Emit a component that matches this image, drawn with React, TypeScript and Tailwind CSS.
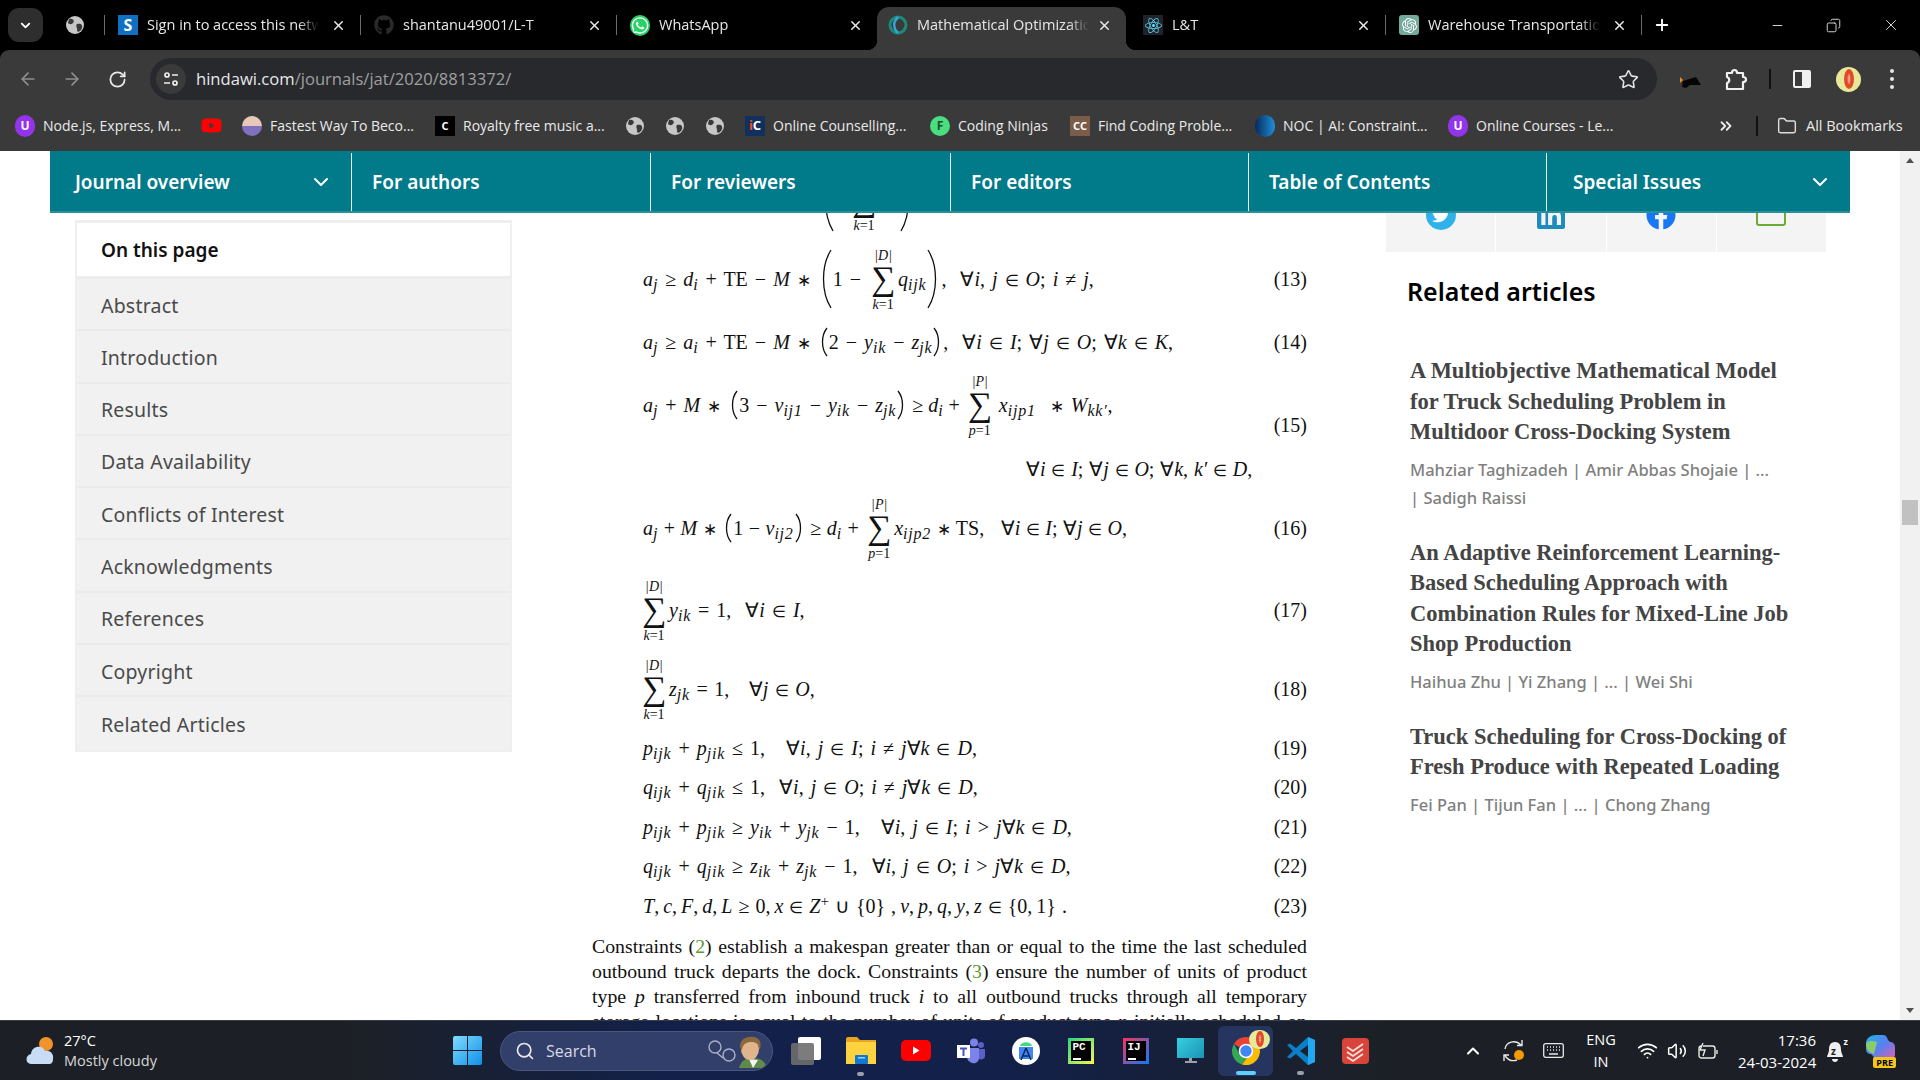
import type { ReactNode } from "react";
import { ArrowLeft, ArrowRight, ChevronDown, ChevronUp, Copy, Folder, Minus, Plus, RotateCw, Search, Star, Volume2, Wifi, X, ChevronsRight } from "lucide-react";
import { FaFacebook, FaGithub, FaLinkedin, FaReact, FaTwitter, FaWhatsapp, FaYoutube } from "react-icons/fa";
import { SiOpenai } from "react-icons/si";

const uiFont = "font-['Open_Sans',sans-serif]";
const plexFont = "font-['Noto_Sans',sans-serif]";

function Globe({ size = 18 }: { size?: number }) {
  return (
    <svg width={size} height={size} viewBox="0 0 18 18">
      <circle cx="9" cy="9" r="9" fill="#c7c7c7" />
      <path d="M3 3 C7 2 9 5 7 7 C5 9 3 8 2 7 Z M11 8 C14 7 17 8 16 12 C15 15 12 17 11 15 C12 12 9 10 11 8 Z" fill="#3a3a3a" />
    </svg>
  );
}

function Tab({ icon, title, active, width = 256 }: { icon: ReactNode; title: string; active?: boolean; width?: number }) {
  return (
    <div className={`relative flex h-[43px] shrink-0 items-center pr-[14px] pb-[7px] ${active ? "rounded-t-[12px] bg-[#3a3a3a] pl-[11px]" : "pl-[14px]"}`} style={{ width }}>
      {active && (
        <>
          <span className="absolute bottom-0 left-[-10px] h-[10px] w-[10px] bg-[radial-gradient(circle_at_0_0,#000_10px,#3a3a3a_10.5px)]" />
          <span className="absolute right-[-10px] bottom-0 h-[10px] w-[10px] bg-[radial-gradient(circle_at_100%_0,#000_10px,#3a3a3a_10.5px)]" />
        </>
      )}
      <span className="flex h-5 w-5 shrink-0 items-center justify-center">{icon}</span>
      <span className={`ml-[9px] w-[172px] overflow-hidden text-[14.5px] whitespace-nowrap text-[#e8e8e8] [mask-image:linear-gradient(to_right,#000_88%,transparent)] ${uiFont}`}>{title}</span>
      <X size={15} strokeWidth={2.4} className="ml-auto shrink-0 text-[#e8e8e8]" />
    </div>
  );
}

function TabDivider() {
  return (
    <span className="mb-[15px] flex w-0 justify-center">
      <span className="h-[20px] w-px shrink-0 bg-[#6a6a6a]" />
    </span>
  );
}

function Square({ className, children }: { className: string; children?: ReactNode }) {
  return <span className={`flex h-5 w-5 shrink-0 items-center justify-center text-[11px] leading-none font-bold ${className}`}>{children}</span>;
}

function Bookmark({ icon, label, width }: { icon: ReactNode; label?: string; width: number }) {
  return (
    <div className="flex shrink-0 items-center" style={{ width }}>
      {icon}
      {label && <span className={`ml-[8px] text-[14px] whitespace-nowrap text-[#eaeaea] ${uiFont}`}>{label}</span>}
    </div>
  );
}

const navItems = [
  { label: "Journal overview", width: 301, caret: true, pad: "pl-[25px]" },
  { label: "For authors", width: 299 },
  { label: "For reviewers", width: 300 },
  { label: "For editors", width: 298 },
  { label: "Table of Contents", width: 298 },
  { label: "Special Issues", width: 304, caret: true, pad: "pl-[26px]" },
];

const sections = ["Abstract", "Introduction", "Results", "Data Availability", "Conflicts of Interest", "Acknowledgments", "References", "Copyright", "Related Articles"];

const related = [
  { title: ["A Multiobjective Mathematical Model", "for Truck Scheduling Problem in", "Multidoor Cross-Docking System"], authors: ["Mahziar Taghizadeh | Amir Abbas Shojaie | ...", "| Sadigh Raissi"], mt: "mt-[48px]" },
  { title: ["An Adaptive Reinforcement Learning-", "Based Scheduling Approach with", "Combination Rules for Mixed-Line Job", "Shop Production"], authors: ["Haihua Zhu | Yi Zhang | ... | Wei Shi"], mt: "mt-[26px]" },
  { title: ["Truck Scheduling for Cross-Docking of", "Fresh Produce with Repeated Loading"], authors: ["Fei Pan | Tijun Fan | ... | Chong Zhang"], mt: "mt-[26px]" },
];

function Paren({ h, right }: { h: number; right?: boolean }) {
  const w = h > 50 ? 13 : 9;
  return (
    <svg width={w} height={h} viewBox={`0 0 ${w} ${h}`} className={`mx-[1px] shrink-0 ${right ? "-scale-x-100" : ""}`}>
      <path d={`M${w - 1} 1 C2 ${h * 0.28} 2 ${h * 0.72} ${w - 1} ${h - 1}`} fill="none" stroke="#111" strokeWidth="1.3" />
    </svg>
  );
}

function Sum({ top, bottom, className = "" }: { top: ReactNode; bottom: ReactNode; className?: string }) {
  return (
    <span className={`mx-[2px] inline-flex w-[26px] shrink-0 flex-col items-center leading-none ${className}`}>
      <span className="flex h-[18px] items-end text-[14px] leading-[16px]">{top}</span>
      <span className="h-[30px] text-[34px] leading-[30px]">∑</span>
      <span className="mt-[3px] text-[14px] leading-[16px]">{bottom}</span>
    </span>
  );
}

function Eq({ h, no, children, pad = "pl-[51px]", spacing = "" }: { h: number; no?: string; children?: ReactNode; pad?: string; spacing?: string }) {
  return (
    <div className={`flex items-center justify-between whitespace-pre ${pad}`} style={{ height: h }}>
      <div className={`flex items-center ${spacing}`}>{children}</div>
      {no && <span className="[word-spacing:0]">{no}</span>}
    </div>
  );
}

const D = <i>|D|</i>;
const P = <i>|P|</i>;
const K1 = <><i>k</i>=1</>;
const P1 = <><i>p</i>=1</>;
const In = <span className="text-[16px]">∈</span>;
const Ast = <span className="text-[17px]">∗</span>;

function ArticleBody() {
  return (
    <div className="mt-[-47px] w-[715px] font-['Liberation_Serif',serif] text-[20px] text-[#111] [word-spacing:2px] [&_sub]:text-[16px] [&_sub]:tracking-[0.8px]">
      <Eq h={68} pad="pl-[228px]">
        <Paren h={64} />
        <Sum top="" bottom={K1} className="ml-[16px]" />
        <span className="w-[20px]" />
        <Paren h={64} right />
      </Eq>
      <div className="h-[11px]" />
      <Eq h={68} no="(13)">
        <span><i>a<sub>j</sub></i> ≥ <i>d<sub>i</sub></i> + TE − <i>M</i> {Ast} </span>
        <Paren h={60} />
        <span>1 − </span>
        <Sum top={D} bottom={K1} />
        <span><i>q<sub>ijk</sub></i></span>
        <Paren h={60} right />
        <span>,  ∀<i>i</i>, <i>j</i> {In} <i>O</i>; <i>i</i> ≠ <i>j</i>,</span>
      </Eq>
      <Eq h={58} no="(14)">
        <span><i>a<sub>j</sub></i> ≥ <i>a<sub>i</sub></i> + TE − <i>M</i> {Ast} </span>
        <Paren h={30} />
        <span>2 − <i>y<sub>ik</sub></i> − <i>z<sub>jk</sub></i></span>
        <Paren h={30} right />
        <span>,  ∀<i>i</i> {In} <i>I</i>; ∀<i>j</i> {In} <i>O</i>; ∀<i>k</i> {In} <i>K</i>,</span>
      </Eq>
      <div className="flex h-[115px] items-start justify-between pl-[51px] whitespace-pre">
        <div className="flex flex-col">
          <div className="flex h-[68px] items-center">
            <span><i>a<sub>j</sub></i> + <i>M</i> {Ast} </span>
            <Paren h={30} />
            <span>3 − <i>v<sub>ij1</sub></i> − <i>y<sub>ik</sub></i> − <i>z<sub>jk</sub></i></span>
            <Paren h={30} right />
            <span className="[word-spacing:0]"> ≥ <i>d<sub>i</sub></i> + </span>
            <Sum top={P} bottom={P1} />
            <span className="ml-[4px]"><i>x<sub>ijp1</sub></i>  {Ast} <i>W<sub>kk′</sub></i>,</span>
          </div>
          <div className="mt-[19px] pl-[383px] leading-[22px] [word-spacing:0.8px]">∀<i>i</i> {In} <i>I</i>; ∀<i>j</i> {In} <i>O</i>; ∀<i>k</i>, <i>k′</i> {In} <i>D</i>,</div>
        </div>
        <span className="mt-[39px] [word-spacing:0]">(15)</span>
      </div>
      <Eq h={84} no="(16)" spacing="[word-spacing:0.5px]">
        <span><i>a<sub>j</sub></i> + <i>M</i> {Ast} </span>
        <Paren h={30} />
        <span>1 − <i>v<sub>ij2</sub></i></span>
        <Paren h={30} right />
        <span> ≥ <i>d<sub>i</sub></i> + </span>
        <Sum top={P} bottom={P1} />
        <span><i>x<sub>ijp2</sub></i> {Ast} TS,   ∀<i>i</i> {In} <i>I</i>; ∀<i>j</i> {In} <i>O</i>,</span>
      </Eq>
      <Eq h={80} no="(17)">
        <Sum top={D} bottom={K1} className="ml-[-2px]" />
        <span><i>y<sub>ik</sub></i> = 1,  ∀<i>i</i> {In} <i>I</i>,</span>
      </Eq>
      <Eq h={78} no="(18)" spacing="[word-spacing:1.5px]">
        <Sum top={D} bottom={K1} className="ml-[-2px]" />
        <span><i>z<sub>jk</sub></i> = 1,   ∀<i>j</i> {In} <i>O</i>,</span>
      </Eq>
      <Eq h={40} no="(19)"><span><i>p<sub>ijk</sub></i> + <i>p<sub>jik</sub></i> ≤ 1,   ∀<i>i</i>, <i>j</i> {In} <i>I</i>; <i>i</i> ≠ <i>j</i>∀<i>k</i> {In} <i>D</i>,</span></Eq>
      <Eq h={38} no="(20)"><span><i>q<sub>ijk</sub></i> + <i>q<sub>jik</sub></i> ≤ 1,  ∀<i>i</i>, <i>j</i> {In} <i>O</i>; <i>i</i> ≠ <i>j</i>∀<i>k</i> {In} <i>D</i>,</span></Eq>
      <Eq h={42} no="(21)"><span><i>p<sub>ijk</sub></i> + <i>p<sub>jik</sub></i> ≥ <i>y<sub>ik</sub></i> + <i>y<sub>jk</sub></i> − 1,   ∀<i>i</i>, <i>j</i> {In} <i>I</i>; <i>i</i> &gt; <i>j</i>∀<i>k</i> {In} <i>D</i>,</span></Eq>
      <Eq h={36} no="(22)"><span><i>q<sub>ijk</sub></i> + <i>q<sub>jik</sub></i> ≥ <i>z<sub>ik</sub></i> + <i>z<sub>jk</sub></i> − 1,  ∀<i>i</i>, <i>j</i> {In} <i>O</i>; <i>i</i> &gt; <i>j</i>∀<i>k</i> {In} <i>D</i>,</span></Eq>
      <Eq h={44} no="(23)" spacing="[word-spacing:1px]"><span><i>T</i>,{"\u2009"}<i>c</i>,{"\u2009"}<i>F</i>,{"\u2009"}<i>d</i>,{"\u2009"}<i>L</i> ≥ 0,{"\u2009"}<i>x</i> {In} <i>Z</i><sup>+</sup> ∪ {"{0}"} ,{"\u2009"}<i>v</i>,{"\u2009"}<i>p</i>,{"\u2009"}<i>q</i>,{"\u2009"}<i>y</i>,{"\u2009"}<i>z</i> {In} {"{0,\u20091}"} .</span></Eq>
      <p className="mt-[6px] text-justify text-[19.8px] leading-[25px] [word-spacing:0]">
        Constraints (<span className="text-[#5a9a2a]">2</span>) establish a makespan greater than or equal to the time the last scheduled outbound truck departs the dock. Constraints (<span className="text-[#5a9a2a]">3</span>) ensure the number of units of product type <i>p</i> transferred from inbound truck <i>i</i> to all outbound trucks through all temporary storage locations is equal to the number of units of product type <i>p</i> initially scheduled on the truck.
      </p>
    </div>
  );
}

function TaskSlot({ children, className = "" }: { children: ReactNode; className?: string }) {
  return <div className={`relative flex h-[50px] w-[55px] shrink-0 items-center justify-center ${className}`}>{children}</div>;
}

function ChromeLogo() {
  return (
    <svg width="30" height="30" viewBox="0 0 30 30">
      <path d="M15 1 A14 14 0 0 1 27.100 8 L15 8 A7 7 0 0 0 8.900 11.500 L2.900 8 A14 14 0 0 1 15 1 Z" fill="#ea4335" />
      <path d="M2.900 8 L8.900 18.500 A7 7 0 0 0 16 22 L11 28.500 A14 14 0 0 1 2.900 8 Z" fill="#34a853" />
      <path d="M27.100 8 A14 14 0 0 1 11 28.500 L16 22 L21 18.500 A7 7 0 0 0 21 11 L15 8 Z" fill="#fbbc05" />
      <circle cx="15" cy="15" r="6.500" fill="#4285f4" stroke="#fff" strokeWidth="1.600" />
    </svg>
  );
}

function Football({ w, h }: { w: number; h: number }) {
  return (
    <svg width={w} height={h} viewBox="0 0 10 20">
      <ellipse cx="5" cy="10" rx="5" ry="10" fill="#e2492a" />
      <path d="M5 5 V15 M3.500 8 H6.500 M3.500 10 H6.500 M3.500 12 H6.500" stroke="#f6d0b8" strokeWidth="0.8" />
    </svg>
  );
}

function JetBrainsBox({ label, border }: { label: string; border: string }) {
  return (
    <span className={`h-[26px] w-[26px] p-[3px] ${border}`}>
      <span className="flex h-full w-full flex-col justify-between bg-black px-[2px] py-[1px] font-['Liberation_Mono',monospace] text-[11px] leading-[11px] font-bold text-white">
        {label}
        <span className="h-[1.5px] w-[8px] bg-white" />
      </span>
    </span>
  );
}

export default function App() {
  return (
    <div className="flex h-screen w-[1920px] flex-col overflow-hidden bg-black">
      {/* tab strip */}
      <div className="flex h-[50px] shrink-0 items-end bg-black">
        <div className="mb-[8px] ml-[8px] flex h-[34px] w-[35px] items-center justify-center rounded-[11px] bg-[#2e2e2e]">
          <ChevronDown size={15} strokeWidth={3} className="text-white" />
        </div>
        <div className="mb-[16px] ml-[23px] w-[38px]"><Globe /></div>
        <TabDivider />
        <Tab icon={<Square className="bg-[#0f6fc0] text-[16px] text-white">S</Square>} title="Sign in to access this network" />
        <TabDivider />
        <Tab icon={<FaGithub size={20} className="text-[#2b2b2b]" />} title="shantanu49001/L-T" />
        <TabDivider />
        <Tab width={261} icon={<FaWhatsapp size={21} className="rounded-full bg-[#25d366] p-[1px] text-white" />} title="WhatsApp" />
        <Tab active width={249} icon={<svg width="20" height="20" viewBox="0 0 20 20"><circle cx="10" cy="10" r="8" fill="none" stroke="#1d8a78" strokeWidth="3" /><path d="M10 2 C5 7 5 13 10 18" fill="none" stroke="#35a4d8" strokeWidth="2.500" /></svg>} title="Mathematical Optimization" />
        <div className="w-[3px]" />
        <Tab icon={<span className="flex h-5 w-5 items-center justify-center bg-[#20232a]"><FaReact size={17} className="text-[#61dafb]" /></span>} title="L&T" />
        <TabDivider />
        <Tab icon={<span className="flex h-5 w-5 items-center justify-center rounded-[3px] bg-[#74aa9c]"><SiOpenai size={15} className="text-white" /></span>} title="Warehouse Transportation" />
        <TabDivider />
        <Plus size={18} strokeWidth={2.5} className="mb-[16px] ml-[12px] text-white" />
        <div className="mb-[16px] ml-auto flex w-[172px] items-center text-[#ddd]">
          <Minus size={15} strokeWidth={1.5} className="ml-[22px]" />
          <Copy size={15} strokeWidth={1.5} className="ml-[41px] -scale-x-100" />
          <X size={18} strokeWidth={1.3} className="ml-[41px]" />
        </div>
      </div>

      {/* toolbar */}
      <div className="flex h-[50px] shrink-0 items-start rounded-t-[9px] bg-[#3a3a3a] pt-[8px]">
        <div className="flex h-[42px] w-[150px] shrink-0 items-center">
          <ArrowLeft size={20} className="ml-[18px] text-[#8f8f8f]" />
          <ArrowRight size={20} className="ml-[24px] text-[#8f8f8f]" />
          <RotateCw size={19} strokeWidth={2.2} className="ml-[26px] text-[#e8e8e8]" />
        </div>
        <div className="flex h-[42px] w-[1507px] items-center rounded-full bg-[#27292d] pl-[6px]">
          <span className="flex h-[30px] w-[30px] items-center justify-center rounded-full bg-[#3a3a3a]">
            <svg width="16" height="16" viewBox="0 0 16 16" fill="none" stroke="#eee" strokeWidth="1.7"><circle cx="4" cy="4" r="2" /><path d="M9 4 H15 M1 12 H7" /><circle cx="12" cy="12" r="2" /></svg>
          </span>
          <span className={`ml-[10px] text-[16.6px] text-[#e8e8e8] ${uiFont}`}>hindawi.com<span className="text-[#a0a0a0]">/journals/jat/2020/8813372/</span></span>
          <Star size={21} strokeWidth={1.8} className="mr-[18px] ml-auto text-[#e4e4e4]" />
        </div>
        <div className="flex h-[42px] flex-1 items-center">
          <svg width="21" height="14" viewBox="0 0 21 14" className="mt-[4px] ml-[23px]"><path d="M3 7 L16 3 L21 11 L10 11 L6 14 L2 13 Z" fill="#050505" /><path d="M0 3 L3 6 L0 9 Z" fill="#f28a1e" /></svg>
          <svg width="23" height="23" viewBox="0 0 23 23" fill="none" stroke="#f0f0f0" strokeWidth="2.200" strokeLinejoin="round" className="ml-[23px]"><path d="M3 5 H8 C8 1 13 1 13 5 H19 V9 C23 9 23 14 19 14 V21 H3 V15 C6 14 6 10 3 9 Z" /></svg>
          <span className="ml-[22px] h-[20px] w-[2px] bg-[#111]" />
          <span className="ml-[22px] flex h-[18px] w-[18px] justify-end rounded-[2px] border-2 border-[#f0f0f0]"><span className="h-full w-[7px] bg-[#f0f0f0]" /></span>
          <span className="ml-[25px] flex h-[25px] w-[25px] items-center justify-center rounded-full bg-[#e8e89a]"><Football w={10} h={20} /></span>
          <span className="ml-[29px] flex flex-col gap-[4px]">
            <span className="h-[4px] w-[4px] rounded-full bg-[#e8e8e8]" />
            <span className="h-[4px] w-[4px] rounded-full bg-[#e8e8e8]" />
            <span className="h-[4px] w-[4px] rounded-full bg-[#e8e8e8]" />
          </span>
        </div>
      </div>

      {/* bookmarks */}
      <div className="flex h-[51px] shrink-0 items-center bg-[#3a3a3a] pl-[15px]">
        <Bookmark width={186} label="Node.js, Express, M..." icon={<span className="flex h-[22px] w-5 shrink-0 items-center justify-center rounded-full bg-[#9333ea] text-[12px] font-bold text-white">U</span>} />
        <Bookmark width={41} icon={<FaYoutube size={21} className="text-[#f00]" />} />
        <Bookmark width={193} label="Fastest Way To Beco..." icon={<span className="h-5 w-5 shrink-0 rounded-full bg-[linear-gradient(#e8c8b8_50%,#8070c0_50%)]" />} />
        <Bookmark width={191} label="Royalty free music a..." icon={<Square className="bg-black text-white">C</Square>} />
        <Bookmark width={40} icon={<Globe />} />
        <Bookmark width={40} icon={<Globe />} />
        <Bookmark width={39} icon={<Globe />} />
        <Bookmark width={185} label="Online Counselling..." icon={<Square className="bg-[#10305f] text-[13px] text-white"><span className="text-[#ff4a1c]">i</span>C</Square>} />
        <Bookmark width={140} label="Coding Ninjas" icon={<span className="flex h-5 w-5 shrink-0 items-center justify-center rounded-full bg-[#4ade80] text-[12px] font-bold text-[#14532d]">F</span>} />
        <Bookmark width={185} label="Find Coding Proble..." icon={<Square className="bg-[#7a5c48] text-white">CC</Square>} />
        <Bookmark width={193} label="NOC | AI: Constraint..." icon={<span className="h-[22px] w-5 shrink-0 rounded-full bg-[linear-gradient(90deg,#062a5e,#1e8fd6)]" />} />
        <Bookmark width={269} label="Online Courses - Le..." icon={<span className="flex h-[22px] w-5 shrink-0 items-center justify-center rounded-full bg-[#9333ea] text-[12px] font-bold text-white">U</span>} />
        <ChevronsRight size={18} strokeWidth={2.4} className="text-[#eaeaea]" />
        <span className="ml-[21px] h-[20px] w-[2px] bg-[#111]" />
        <Folder size={20} strokeWidth={1.7} className="ml-[19px] text-[#ddd]" />
        <span className={`ml-[9px] text-[14.5px] whitespace-nowrap text-[#eaeaea] ${uiFont}`}>All Bookmarks</span>
      </div>

      {/* page */}
      <div className="relative flex min-h-0 flex-1 overflow-hidden bg-white">
        <div className="min-w-0 flex-1 pl-[50px]">
          <nav className={`relative z-10 flex h-[62px] w-[1800px] border-b-2 border-[#2a8f9c] bg-[#017a8a] pt-[2px] text-[19px] font-semibold text-white ${plexFont}`}>
            {navItems.map((item, i) => (
              <div key={item.label} className={`flex items-center ${i > 0 ? "border-l border-white/90" : ""} ${item.pad ?? "pl-[20px]"}`} style={{ width: item.width }}>
                {item.label}
                {item.caret && <ChevronDown size={24} strokeWidth={2} className="mr-[18px] ml-auto" />}
              </div>
            ))}
          </nav>

          <div className="flex">
            <aside className={`mt-[7px] ml-[25px] h-fit w-[437px] shrink-0 border-2 border-t-3 border-[#efefef] ${plexFont}`}>
              <div className="flex h-[56px] items-center border-b-3 border-[#ececec] pt-[1px] pl-[24px] text-[19px] font-semibold text-[#111]">On this page</div>
              {sections.map((s) => (
                <div key={s} className="flex h-[52.3px] items-center border-b-2 border-[#ebebeb] bg-[#f1f1f1] pt-[2px] pl-[24px] text-[19.5px] tracking-[0.2px] text-[#4a4a4a] last:border-b-0">{s}</div>
              ))}
            </aside>

            <div className="ml-[80px] shrink-0"><ArticleBody /></div>

            <aside className="ml-[79px] w-[440px] shrink-0">
              <div className="-mt-[28px] flex h-[67px] gap-[1px]">
                <div className="flex flex-1 items-center justify-center bg-[#f4f4f4] pb-[8px]"><span className="flex h-[30px] w-[30px] items-center justify-center rounded-full bg-[#2fb1ec]"><FaTwitter size={18} className="text-white" /></span></div>
                <div className="flex flex-1 items-center justify-center bg-[#f4f4f4] pb-[8px]"><FaLinkedin size={32} className="text-[#1d8bbd]" /></div>
                <div className="flex flex-1 items-center justify-center bg-[#f4f4f4] pb-[8px]"><FaFacebook size={30} className="text-[#1877f2]" /></div>
                <div className="flex flex-1 items-center justify-center bg-[#f4f4f4] pb-[16px]"><span className="h-[30px] w-[30px] rounded-[3px] border-2 border-[#6aab3a]" /></div>
              </div>
              <h2 className={`mt-[22px] ml-[21px] text-[25px] leading-[34px] font-semibold text-black ${plexFont}`}>Related articles</h2>
              <div className="ml-[24px]">
                {related.map((a) => (
                  <div key={a.title[0]} className={a.mt}>
                    <div className="font-['Liberation_Serif',serif] text-[22.5px] leading-[30.500px] font-bold whitespace-nowrap text-[#444]">
                      {a.title.map((t) => <div key={t}>{t}</div>)}
                    </div>
                    <div className={`mt-[8px] text-[16.5px] leading-[28px] font-medium whitespace-nowrap text-[#808080] ${plexFont}`}>
                      {a.authors.map((t) => <div key={t}>{t}</div>)}
                    </div>
                  </div>
                ))}
              </div>
            </aside>
          </div>
        </div>

        {/* scrollbar */}
        <div className="relative z-20 flex w-[20px] shrink-0 flex-col items-center bg-[#f1f1f1]">
          <span className="mt-[7px] h-0 w-0 border-x-[4px] border-b-[5px] border-x-transparent border-b-[#505050]" />
          <span className="mt-[337px] h-[25px] w-[16px] bg-[#c1c1c1]" />
          <span className="mt-auto mb-[7px] h-0 w-0 border-x-[4px] border-t-[5px] border-x-transparent border-t-[#505050]" />
        </div>
      </div>

      {/* taskbar */}
      <div className={`flex h-[60px] shrink-0 items-center border-t border-[#3a3d45] bg-[linear-gradient(90deg,#1c2026_0%,#1c2026_18%,#12204a_35%,#12204a_52%,#1c2026_72%,#1c2026_100%)] text-white ${uiFont}`}>
        <div className="flex w-[453px] shrink-0 items-center pl-[25px]">
          <svg width="32" height="36" viewBox="0 0 32 36"><circle cx="21" cy="11" r="7" fill="#f0932b" /><path d="M6 31 C0 31 0 22 6 21 C7 12 18 12 20 18 C26 17 29 22 28 26 C28 30 26 31 24 31 Z" fill="#c8dcf6" /></svg>
          <div className="ml-[7px] text-[14.5px] leading-[20px]">
            <div>27°C</div>
            <div className="text-[#d8d8d8]">Mostly cloudy</div>
          </div>
        </div>
        <svg width="29" height="29" viewBox="0 0 29 29" className="shrink-0">
          <defs><linearGradient id="win" x1="0" y1="0" x2="1" y2="1"><stop offset="0" stopColor="#7fdcfd" /><stop offset="1" stopColor="#0f8fe8" /></linearGradient></defs>
          <path d="M2 0 H14 V14 H0 V2 Q0 0 2 0 Z M15 0 H27 Q29 0 29 2 V14 H15 Z M0 15 H14 V29 H2 Q0 29 0 27 Z M15 15 H29 V27 Q29 29 27 29 H15 Z" fill="url(#win)" />
        </svg>
        <div className="ml-[18px] flex h-[40px] w-[273px] shrink-0 items-center overflow-hidden rounded-full border border-[#4a5680] bg-[#333f6b] pl-[14px]">
          <Search size={20} className="text-[#e8e8e8]" />
          <span className="ml-[11px] text-[16px] text-[#d8dae4]">Search</span>
          <svg width="30" height="24" viewBox="0 0 30 24" fill="none" stroke="#aab0c4" strokeWidth="1.4" className="ml-auto shrink-0">
            <circle cx="8" cy="8" r="6" /><circle cx="22" cy="16" r="6" /><path d="M10 14 L16 19" />
          </svg>
          <svg width="30" height="34" viewBox="0 0 30 34" className="mr-[5px] shrink-0">
            <path d="M2 34 C4 26 10 24 15 24 C22 24 28 26 30 34 Z" fill="#5f8a4a" />
            <path d="M12 25 L16 34 L21 26 Z" fill="#f4f4f4" />
            <ellipse cx="13" cy="15" rx="9" ry="11" fill="#e2b48c" />
            <path d="M3 12 C3 3 14 1 20 4 C25 7 24 14 22 16 C22 10 19 8 15 8 C10 8 6 9 5 16 C4 15 3 14 3 12 Z" fill="#8a6a3c" />
          </svg>
        </div>
        <div className="ml-[5px] flex shrink-0">
          <TaskSlot><span className="relative h-[28px] w-[30px]"><span className="absolute top-0 right-0 h-[23px] w-[23px] rounded-[2px] bg-white" /><span className="absolute bottom-0 left-0 h-[22px] w-[23px] rounded-[2px] bg-[#6e6e6e]/90" /></span></TaskSlot>
          <TaskSlot>
            <svg width="30" height="27" viewBox="0 0 30 27"><path d="M0 2 Q0 0 2 0 H11 L14 3 H30 V27 H0 Z" fill="#e8a520" /><path d="M0 5 H30 V27 H0 Z" fill="#ffd23f" /><rect x="9" y="18" width="13" height="9" rx="1" fill="#0f78d4" /><rect x="12" y="20" width="7" height="1.500" fill="#9ed0f5" /></svg>
            <span className="absolute bottom-0 h-[4px] w-[7px] rounded-full bg-[#9aa0aa]" />
          </TaskSlot>
          <TaskSlot>
            <svg width="30" height="21" viewBox="0 0 30 21"><rect width="30" height="21" rx="5" fill="#f00" /><path d="M12 6.500 L18.500 10.500 L12 14.500 Z" fill="#fff" /></svg>
          </TaskSlot>
          <TaskSlot>
            <svg width="28" height="26" viewBox="0 0 28 26">
              <circle cx="17" cy="4.500" r="4" fill="#7b83eb" /><circle cx="24" cy="7" r="3" fill="#5b5fc7" />
              <path d="M21 11 H28 V18 C28 21 25 22 22 21 Z" fill="#5b5fc7" /><path d="M10 10 H22 V20 C22 24 18 26 15 25 C12 24 10 22 10 19 Z" fill="#7b83eb" />
              <rect y="7" width="13" height="13" fill="#fff" />
              <path d="M3 9.500 H10 V11.500 H7.500 V18 H5.500 V11.500 H3 Z" fill="#4b53bc" />
            </svg>
          </TaskSlot>
          <TaskSlot>
            <svg width="28" height="28" viewBox="0 0 28 28">
              <circle cx="14" cy="14" r="14" fill="#fff" />
              <path d="M8 9 C9 4 19 4 20 9 Z" fill="#3ddc84" />
              <path d="M7 10 H21 V22 H7 Z" fill="#4285f4" />
              <path d="M14 11 L9 23 M14 11 L19 23 M11 19 H17" stroke="#0b2a55" strokeWidth="1.500" fill="none" />
            </svg>
          </TaskSlot>
          <TaskSlot><JetBrainsBox label="PC" border="bg-[linear-gradient(135deg,#21d789,#fcf84a)]" /></TaskSlot>
          <TaskSlot><JetBrainsBox label="IJ" border="bg-[linear-gradient(135deg,#fe315d,#087cfa)]" /></TaskSlot>
          <TaskSlot>
            <span className="flex flex-col items-center">
              <span className="h-[20px] w-[27px] bg-[linear-gradient(135deg,#36cfe0,#1c94b4)]" />
              <span className="h-[3px] w-[3px] bg-[#9aa0a6]" />
              <span className="h-[2px] w-[12px] bg-[#9aa0a6]" />
            </span>
          </TaskSlot>
          <TaskSlot className="rounded-[6px] bg-[#26355f]">
            <ChromeLogo />
            <span className="absolute top-[4px] right-[3px] flex h-[19px] w-[21px] items-center justify-center rounded-full bg-[#e8e89a]"><Football w={8} h={16} /></span>
            <span className="absolute bottom-[1px] h-[4px] w-[20px] rounded-full bg-[#60cdff]" />
          </TaskSlot>
          <TaskSlot>
            <svg width="30" height="30" viewBox="0 0 30 30">
              <path fillRule="evenodd" d="M22 1 L10 12 L4 7.500 L1 9 L7 15 L1 21 L4 22.500 L10 18 L22 29 L29 26 V4 Z M22 9 V21 L14 15 Z" fill="#0a7fc7" />
              <path fillRule="evenodd" d="M22 1 L29 4 V26 L22 29 Z" fill="#22a7f0" />
            </svg>
            <span className="absolute bottom-[1px] h-[4px] w-[7px] rounded-full bg-[#9aa0aa]" />
          </TaskSlot>
          <TaskSlot>
            <svg width="27" height="26" viewBox="0 0 27 26">
              <rect width="27" height="26" rx="4" fill="#d9443a" />
              <path d="M5 9 L11 13 L21 6 M5 14 L11 18 L21 11 M5 19 L11 23 L21 16" fill="none" stroke="#fbe4e0" strokeWidth="1.800" />
            </svg>
          </TaskSlot>
        </div>
        <ChevronUp size={20} strokeWidth={2.4} className="ml-[80px] shrink-0" />
        <svg width="22" height="24" viewBox="0 0 22 24" fill="none" stroke="#e8e8e8" strokeWidth="1.400" className="ml-[20px] shrink-0">
          <path d="M2 10 C3 3 12 0 18 6 M19 1 V6.500 H14 M14 21 C8 23 3 20 2 16 M1 22 V16 H6" />
          <circle cx="16" cy="16" r="5" fill="#f59a00" stroke="none" />
        </svg>
        <svg width="21" height="15" viewBox="0 0 21 15" fill="none" stroke="#e8e8e8" strokeWidth="1.300" className="ml-[18px] shrink-0">
          <rect x="0.700" y="0.700" width="19.600" height="13.600" rx="2" /><path d="M4 4 H5 M7 4 H8 M10 4 H11 M13 4 H14 M16 4 H17 M4 7 H5 M7 7 H8 M10 7 H11 M13 7 H14 M16 7 H17 M6 11 H15" />
        </svg>
        <div className="ml-[18px] w-[38px] shrink-0 text-center text-[14.5px] leading-[22px]">ENG<br />IN</div>
        <Wifi size={21} className="ml-[17px] shrink-0" />
        <Volume2 size={20} strokeWidth={1.8} className="ml-[9px] shrink-0" />
        <svg width="21" height="18" viewBox="0 0 21 18" fill="none" stroke="#e8e8e8" strokeWidth="1.400" className="ml-[11px] shrink-0">
          <rect x="1" y="4" width="16" height="12" rx="2.500" /><path d="M19 8 V12" /><path d="M5 1 L2 8 H7 L5 14" fill="#1c2026" />
        </svg>
        <div className="ml-[19px] w-[78px] shrink-0 text-right text-[15px] leading-[22px] whitespace-nowrap">17:36<br />24-03-2024</div>
        <span className="relative ml-[10px] h-[24px] w-[20px] shrink-0">
          <svg width="18" height="22" viewBox="0 0 18 22" className="mt-[2px]"><path d="M9 1 C4 1 3 5 3 9 C3 12 1 14 1 16 H17 C17 14 15 12 15 9 C15 5 14 1 9 1 Z M6 18 H12 C12 22 6 22 6 18 Z" fill="#f0f0f0" /></svg>
          <span className="absolute top-[-2px] right-[-2px] text-[9px] leading-[10px] font-bold">z</span>
          <span className="absolute top-[7px] left-[5px] text-[10px] leading-[10px] font-bold text-[#1c2026]">z</span>
        </span>
        <span className="relative ml-[20px] h-[34px] w-[30px] shrink-0">
          <svg width="30" height="28" viewBox="0 0 30 28">
            <defs><linearGradient id="cop" x1="0" y1="0" x2="1" y2="1"><stop offset="0" stopColor="#1fb5e8" /><stop offset="0.5" stopColor="#5a7ff0" /><stop offset="1" stopColor="#e060b0" /></linearGradient></defs>
            <path d="M10 1 H17 C20 1 21 3 22 6 L24 8 C27 8 29 10 29 13 V20 C29 24 26 26 22 26 H12 C9 26 8 24 7 22 L5 20 C2 20 0 18 0 15 V9 C0 4 5 1 10 1 Z" fill="url(#cop)" />
            <path d="M0 10 C0 16 4 19 8 20 L11 8 C7 7 2 6 0 10 Z" fill="#9dd94a" opacity="0.800" />
          </svg>
          <span className="absolute right-0 bottom-0 rounded-[2px] bg-[#f5c518] px-[3px] text-[9px] leading-[11px] font-bold text-black">PRE</span>
        </span>
      </div>
    </div>
  );
}
